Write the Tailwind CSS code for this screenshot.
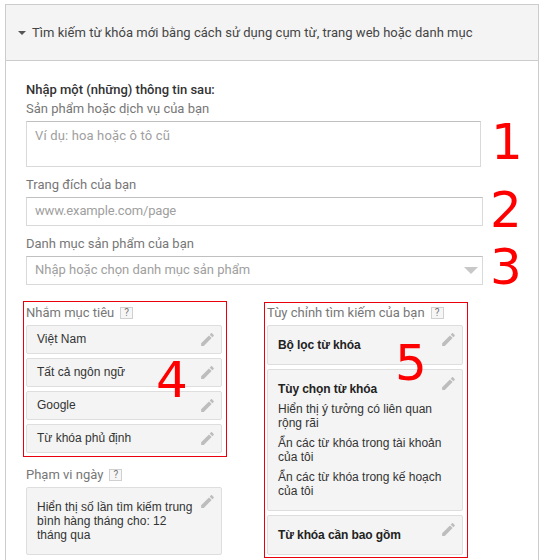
<!DOCTYPE html>
<html lang="vi">
<head>
<meta charset="UTF-8">
<title>Tìm kiếm từ khóa</title>
<script src="https://cdn.jsdelivr.net/npm/@tailwindcss/browser@4"></script>
</head>
<body class="bg-white h-[560px] overflow-hidden font-['Liberation_Sans',Arial,sans-serif]">
<svg class="hidden"><symbol id="pencil" viewBox="0 0 24 24"><path d="M3 17.25V21h3.75L17.81 9.94l-3.75-3.75L3 17.25zM20.71 7.04c.39-.39.39-1.02 0-1.41l-2.34-2.34c-.39-.39-1.02-.39-1.41 0l-1.83 1.83 3.75 3.75 1.83-1.83z"/></symbol></svg>

<div class="relative ml-[5px] mt-[4px] w-[534px] border border-[#cccccc] h-[600px]">
    <!-- header -->
    <div class="flex items-center h-[56px] bg-[#f4f4f4] border-b border-[#cccccc] pl-[12px] font-['Roboto',sans-serif] text-[13px] text-[#444444]">
        <span class="w-0 h-0 border-x-[4px] border-x-transparent border-t-[4px] border-t-[#555555] mr-[6px]"></span>
        <span class="tracking-[0.03px]">Tìm kiếm từ khóa mới bằng cách sử dụng cụm từ, trang web hoặc danh mục</span>
    </div>

    <div class="pl-[20px] font-['Roboto',sans-serif] text-[13px]">
        <div class="mt-[20px] leading-[18px] font-medium text-[#333333]">Nhập một (những) thông tin sau:</div>
        <div class="mt-[1px] leading-[18px] text-[#777777]">Sản phẩm hoặc dịch vụ của bạn</div>
        <div class="mt-[3px] w-[455px] h-[46px] border border-[#d9d9d9] border-t-[#c0c0c0] pl-[8px] pt-[5px] leading-[18px] tracking-[0.15px] text-[#a0a0a0]">Ví dụ: hoa hoặc ô tô cũ</div>

        <div class="mt-[9px] leading-[18px] text-[#777777]">Trang đích của bạn</div>
        <div class="mt-[3px] w-[457px] h-[29px] border border-[#d9d9d9] border-t-[#c0c0c0] pl-[8px] leading-[25px] tracking-[-0.15px] text-[#a0a0a0]">www.example.com/page</div>

        <div class="mt-[9px] leading-[18px] text-[#777777]">Danh mục sản phẩm của bạn</div>
        <div class="mt-[3px] w-[457px] h-[29px] border border-[#d9d9d9] border-t-[#c0c0c0] pl-[8px] pr-[4px] leading-[25px] text-[#a0a0a0] flex items-center justify-between">
            <span class="mb-[2px]">Nhập hoặc chọn danh mục sản phẩm</span>
            <span class="w-0 h-0 border-x-[7px] border-x-transparent border-t-[7px] border-t-[#c8c8c8]"></span>
        </div>

        <div class="flex items-start mt-[16px] -ml-[3px]">
            <!-- left column -->
            <div class="w-[204px]">
                <div class="border border-[#e8000d] h-[156px] px-[2px] pt-[1px]">
                    <div class="flex items-center h-[19px] text-[#777777]">Nhắm mục tiêu
                        <span class="ml-[6px] w-[13px] h-[12px] border border-[#d0d0d0] bg-[#f6f6f6] text-[10px] leading-[10px] text-center text-[#777777]">?</span>
                    </div>
                    <div class="flex flex-col gap-[4px] mt-[3px] font-['Liberation_Sans',Arial,sans-serif] text-[12px] text-[#333333]">
                        <div class="flex justify-between items-center w-[196px] h-[29px] bg-[#f4f4f4] border border-[#dedede] rounded-[2px] pl-[10px] pr-[5px]">
                            <span class="mb-[2px]">Việt Nam</span>
                            <svg class="w-[17px] h-[17px] fill-[#bdbdbd]"><use href="#pencil"/></svg>
                        </div>
                        <div class="flex justify-between items-center w-[196px] h-[29px] bg-[#f4f4f4] border border-[#dedede] rounded-[2px] pl-[10px] pr-[5px]">
                            <span class="mb-[2px]">Tất cả ngôn ngữ</span>
                            <svg class="w-[17px] h-[17px] fill-[#bdbdbd]"><use href="#pencil"/></svg>
                        </div>
                        <div class="flex justify-between items-center w-[196px] h-[29px] bg-[#f4f4f4] border border-[#dedede] rounded-[2px] pl-[10px] pr-[5px]">
                            <span class="mb-[2px]">Google</span>
                            <svg class="w-[17px] h-[17px] fill-[#bdbdbd]"><use href="#pencil"/></svg>
                        </div>
                        <div class="flex justify-between items-center w-[196px] h-[29px] bg-[#f4f4f4] border border-[#dedede] rounded-[2px] pl-[10px] pr-[5px]">
                            <span class="mb-[2px]">Từ khóa phủ định</span>
                            <svg class="w-[17px] h-[17px] fill-[#bdbdbd]"><use href="#pencil"/></svg>
                        </div>
                    </div>
                </div>
                <div class="flex items-center h-[20px] mt-[8px] ml-[3px] text-[#777777]">Phạm vi ngày
                    <span class="ml-[6px] w-[13px] h-[12px] border border-[#d0d0d0] bg-[#f6f6f6] text-[10px] leading-[10px] text-center text-[#777777]">?</span>
                </div>
                <div class="relative w-[196px] h-[68px] mt-[2px] ml-[3px] bg-[#f4f4f4] border border-[#dedede] rounded-[2px] pl-[10px] pr-[24px] pt-[12px] font-['Liberation_Sans',Arial,sans-serif] text-[12px] leading-[14px] text-[#333333]">
                    Hiển thị số lần tìm kiếm trung bình hàng tháng cho: 12 tháng qua
                    <svg class="absolute top-[5px] right-[5px] w-[17px] h-[17px] fill-[#bdbdbd]"><use href="#pencil"/></svg>
                </div>
            </div>

            <!-- right column -->
            <div class="w-[204px] h-[256px] ml-[37px] mt-[1px] border border-[#e8000d] px-[2px]">
                <div class="flex items-center h-[19px] text-[#777777]">Tùy chỉnh tìm kiếm của bạn
                    <span class="ml-[6px] w-[13px] h-[12px] border border-[#d0d0d0] bg-[#f6f6f6] text-[10px] leading-[10px] text-center text-[#777777]">?</span>
                </div>
                <div class="flex flex-col gap-[4px] mt-[3px] font-['Liberation_Sans',Arial,sans-serif] text-[12px] leading-[14px] text-[#333333]">
                    <div class="relative w-[196px] h-[40px] bg-[#f4f4f4] border border-[#dedede] rounded-[2px] pl-[10px] pt-[12px] font-bold tracking-[-0.1px] text-[#222222]">
                        Bộ lọc từ khóa
                        <svg class="absolute top-[5px] right-[5px] w-[17px] h-[17px] fill-[#bdbdbd]"><use href="#pencil"/></svg>
                    </div>
                    <div class="relative w-[196px] h-[142px] bg-[#f4f4f4] border border-[#dedede] rounded-[2px] pl-[10px] pr-[14px] pt-[12px]">
                        <div class="font-bold tracking-[-0.1px] text-[#222222] mb-[6px]">Tùy chọn từ khóa</div>
                        <div class="mb-[6px]">Hiển thị ý tưởng có liên quan rộng rãi</div>
                        <div class="mb-[6px]">Ẩn các từ khóa trong tài khoản của tôi</div>
                        <div>Ẩn các từ khóa trong kế hoạch của tôi</div>
                        <svg class="absolute top-[5px] right-[5px] w-[17px] h-[17px] fill-[#bdbdbd]"><use href="#pencil"/></svg>
                    </div>
                    <div class="relative w-[196px] h-[40px] bg-[#f4f4f4] border border-[#dedede] rounded-[2px] pl-[10px] pt-[12px] font-bold tracking-[-0.1px] text-[#222222]">
                        Từ khóa cần bao gồm
                        <svg class="absolute top-[5px] right-[5px] w-[17px] h-[17px] fill-[#bdbdbd]"><use href="#pencil"/></svg>
                    </div>
                </div>
            </div>
        </div>
    </div>

    <!-- annotations drawn over the page -->
    <span class="absolute left-[485px] top-[107px] font-['DejaVu_Sans',sans-serif] text-[50px] leading-[60px] text-[#ff0000]">1</span>
    <span class="absolute left-[484px] top-[175px] font-['DejaVu_Sans',sans-serif] text-[50px] leading-[60px] text-[#ff0000]">2</span>
    <span class="absolute left-[484px] top-[232px] font-['DejaVu_Sans',sans-serif] text-[50px] leading-[60px] text-[#ff0000]">3</span>
    <span class="absolute left-[150px] top-[345px] font-['DejaVu_Sans',sans-serif] text-[50px] leading-[60px] text-[#ff0000]">4</span>
    <span class="absolute left-[389px] top-[328px] font-['DejaVu_Sans',sans-serif] text-[50px] leading-[60px] text-[#ff0000]">5</span>
</div>
</body>
</html>
